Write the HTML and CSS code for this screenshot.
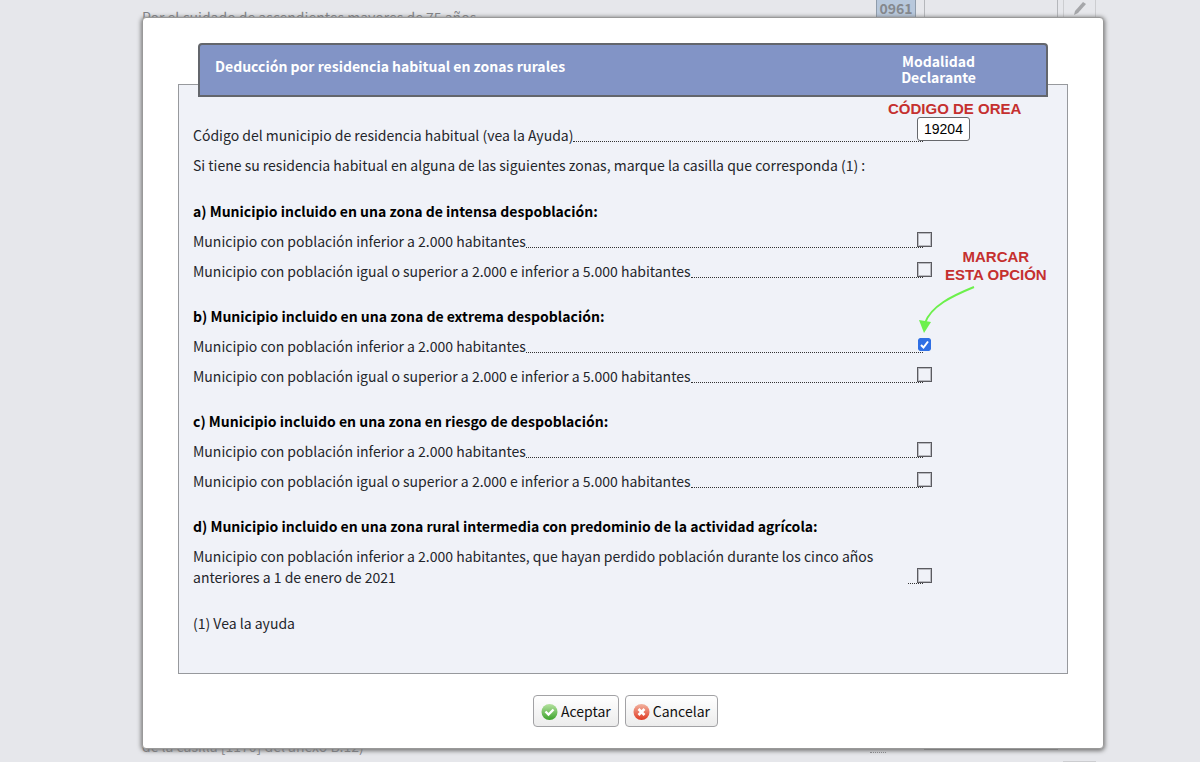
FILE: index.html
```html
<!DOCTYPE html>
<html lang="es">
<head>
<meta charset="utf-8">
<title>Deducción por residencia habitual en zonas rurales</title>
<link rel="stylesheet" href="styles.css">
</head>
<body>
<div class="page" inert>
  <div class="page-row">
    <span class="page-text">Por el cuidado de ascendientes mayores de 75 años</span>
    <span class="page-code">0961</span>
    <span class="page-field"></span>
    <span class="page-edit">
      <svg width="16" height="16" viewBox="0 0 16 16"><path d="M2 15l1-4 8-9 3 2-8 9z" fill="#a5a6a9"/></svg>
    </span>
  </div>
  <div class="page-row page-row-end">
    <span class="page-text">de la casilla [1170] del anexo B.12)</span>
    <span class="page-dots"></span>
    <span class="page-field page-field-end"></span>
    <span class="page-edit page-edit-end"></span>
  </div>
</div>

<div class="overlay">
  <form class="dialog" role="dialog" aria-labelledby="title">
    <section class="panel">
      <header class="panel-head">
        <h1 class="title" id="title">Deducción por residencia habitual en zonas rurales</h1>
        <div class="mode">Modalidad<br>Declarante</div>
      </header>

      <div class="group">
        <div class="row">
          <label class="label" for="code">Código del municipio de residencia habitual (vea la Ayuda)</label>
          <span class="leader"></span>
          <span class="control">
            <input class="code" id="code" type="text" value="19204">
            <span class="note note-code">CÓDIGO DE OREA</span>
          </span>
        </div>
        <p class="text">Si tiene su residencia habitual en alguna de las siguientes zonas, marque la casilla que corresponda (1) :</p>
      </div>

      <div class="group">
        <h2 class="subtitle">a) Municipio incluido en una zona de intensa despoblación:</h2>
        <div class="row">
          <label class="label" for="a1">Municipio con población inferior a 2.000 habitantes</label>
          <span class="leader"></span>
          <span class="control"><input class="check" id="a1" type="checkbox"></span>
        </div>
        <div class="row">
          <label class="label" for="a2">Municipio con población igual o superior a 2.000 e inferior a 5.000 habitantes</label>
          <span class="leader"></span>
          <span class="control"><input class="check" id="a2" type="checkbox"></span>
        </div>
      </div>

      <div class="group">
        <h2 class="subtitle">b) Municipio incluido en una zona de extrema despoblación:</h2>
        <div class="row">
          <label class="label" for="b1">Municipio con población inferior a 2.000 habitantes</label>
          <span class="leader"></span>
          <span class="control">
            <input class="check" id="b1" type="checkbox" checked>
            <span class="note note-option">MARCAR<br>ESTA OPCIÓN</span>
            <svg class="arrow" width="60" height="50" viewBox="0 0 60 50"><path d="M56 3C34 12 13 22 7 39" fill="none" stroke="#6cf04c" stroke-width="2"/><path d="M1 36l12 2-7 11z" fill="#6cf04c"/></svg>
          </span>
        </div>
        <div class="row">
          <label class="label" for="b2">Municipio con población igual o superior a 2.000 e inferior a 5.000 habitantes</label>
          <span class="leader"></span>
          <span class="control"><input class="check" id="b2" type="checkbox"></span>
        </div>
      </div>

      <div class="group">
        <h2 class="subtitle">c) Municipio incluido en una zona en riesgo de despoblación:</h2>
        <div class="row">
          <label class="label" for="c1">Municipio con población inferior a 2.000 habitantes</label>
          <span class="leader"></span>
          <span class="control"><input class="check" id="c1" type="checkbox"></span>
        </div>
        <div class="row">
          <label class="label" for="c2">Municipio con población igual o superior a 2.000 e inferior a 5.000 habitantes</label>
          <span class="leader"></span>
          <span class="control"><input class="check" id="c2" type="checkbox"></span>
        </div>
      </div>

      <div class="group">
        <h2 class="subtitle">d) Municipio incluido en una zona rural intermedia con predominio de la actividad agrícola:</h2>
        <div class="row">
          <label class="label" for="d1">Municipio con población inferior a 2.000 habitantes, que hayan perdido población durante los cinco años anteriores a 1 de enero de 2021</label>
          <span class="leader"></span>
          <span class="control"><input class="check" id="d1" type="checkbox"></span>
        </div>
      </div>

      <p class="text">(1) Vea la ayuda</p>
    </section>

    <div class="actions">
      <button class="button" type="submit">
        <svg width="18" height="18" viewBox="0 0 18 18">
          <defs><linearGradient id="green" x1="0" y1="0" x2="0" y2="1"><stop offset="0" stop-color="#b5e2a0"/><stop offset="1" stop-color="#3da32c"/></linearGradient></defs>
          <circle cx="8.500" cy="10" r="8" fill="url(#green)"/>
          <path d="M4.500 9.500l3 3 5-5" fill="none" stroke="#fff" stroke-width="2.400"/>
        </svg>
        Aceptar
      </button>
      <button class="button" type="button">
        <svg width="18" height="18" viewBox="0 0 18 18">
          <defs><linearGradient id="red" x1="0" y1="0" x2="0" y2="1"><stop offset="0" stop-color="#f2b3a0"/><stop offset="1" stop-color="#e03a22"/></linearGradient></defs>
          <circle cx="8.500" cy="10" r="8" fill="url(#red)"/>
          <path d="M5.500 7l6 6M11.500 7l-6 6" fill="none" stroke="#fff" stroke-width="2.600"/>
        </svg>
        Cancelar
      </button>
    </div>
  </form>
</div>
</body>
</html>
```
FILE: styles.css
```css
* {
  box-sizing: border-box;
}

body {
  margin: 0;
  background: #e6e7eb;
  color: #24262b;
  font: 14px/21px "Noto Sans CJK SC", "Open Sans", sans-serif;
}

h1, h2, p {
  margin: 0;
}

/* Form behind the dialog */
.page {
  display: flex;
  flex-direction: column;
  justify-content: space-between;
  height: 100vh;
  padding: 0 104px 0 142px;
  overflow: hidden;
  color: #808286;
}

.page-row {
  display: flex;
  align-items: flex-start;
}

.page-text {
  flex: 1;
  padding-top: 7px;
}

.page-code {
  width: 40px;
  height: 21px;
  margin-right: 8px;
  border: 1px solid #8f9cab;
  border-top: 0;
  background: #b8c8dc;
  color: #85888e;
  font-weight: 700;
  line-height: 17px;
  text-align: center;
}

.page-field {
  width: 134px;
  height: 21px;
  margin-right: 5px;
  border: 1px solid #b5b7bb;
  border-top: 0;
}

.page-edit {
  display: flex;
  justify-content: center;
  width: 33px;
  height: 21px;
  border: 1px solid #cccdd0;
  border-top: 0;
}

.page-row-end {
  height: 30px;
}

.page-row-end .page-text {
  padding-top: 4px;
}

.page-dots {
  width: 16px;
  height: 21px;
  margin-right: 38px;
  border-bottom: 1px dotted #8b8d91;
}

.page-field-end {
  height: 18px;
  border: 0;
  border-bottom: 1px solid #8f8f91;
}

.page-edit-end {
  height: 30px;
  border: 0;
  border-bottom: 1px solid #cccdd0;
}

/* Dialog */
.overlay {
  position: absolute;
  inset: 0;
  padding: 17px 96px 0 142px;
}

.dialog {
  padding: 66px 35px 21px;
  border: 1px solid #999;
  border-radius: 4px;
  background: #fff;
  box-shadow: 0 1px 4px 1px #777;
}

.panel {
  padding: 0 14px 39px;
  border: 1px solid #97999d;
  background: #f0f2f8;
}

.panel-head {
  display: flex;
  justify-content: space-between;
  align-items: flex-start;
  margin: -42px 5px 28px;
  padding: 8px 70px 10px 15px;
  border: 2px solid #63666c;
  border-radius: 4px 4px 0 0;
  background: #8294c6;
  color: #fff;
  font-weight: 700;
}

.title {
  padding-top: 3px;
  font-size: 14px;
  line-height: 21px;
}

.mode {
  line-height: 16px;
  text-align: center;
}

.group {
  display: flex;
  flex-direction: column;
  gap: 9px;
  margin-bottom: 24px;
}

.group:first-of-type,
.group:last-of-type {
  margin-bottom: 25px;
}

.subtitle {
  color: #000;
  font-size: 14px;
  line-height: 21px;
}

.row {
  display: flex;
  align-items: flex-end;
}

.label {
  max-width: 715px;
}

.leader {
  flex: 1;
  margin: 0 -6px 4px 0;
  border-bottom: 1px dotted #333;
}

.control {
  display: flex;
  position: relative;
  width: 136px;
}

.check {
  appearance: none;
  width: 15px;
  height: 15px;
  margin: 0 0 5px;
  border: 1px solid #5b5b60;
  outline: 1px solid #b9bac0;
  outline-offset: -2px;
}

.check:checked {
  border: 1px solid #f0f2f8;
  border-radius: 3px;
  outline: 0;
  background: #2f6fe4 url("data:image/svg+xml,%3Csvg xmlns='http://www.w3.org/2000/svg' viewBox='0 0 13 13'%3E%3Cpath d='M3 7l2.500 2.500L10 3.500' fill='none' stroke='white' stroke-width='2'/%3E%3C/svg%3E") padding-box;
  background-clip: padding-box;
}

.code {
  width: 53px;
  height: 24px;
  margin: -8px 0 5px;
  padding: 0 6px;
  border: 1px solid #66686c;
  border-radius: 3px;
  background: #fff;
  color: #000;
  font: 14px "Liberation Sans", Arial, sans-serif;
}

.note {
  position: absolute;
  color: #c5302f;
  font: 700 15px/18px "Liberation Sans", Arial, sans-serif;
  text-align: center;
  white-space: nowrap;
}

.note-code {
  bottom: 28px;
  left: -29px;
}

.note-option {
  bottom: 73px;
  left: 28px;
}

.arrow {
  position: absolute;
  bottom: 23px;
  left: 1px;
}

.actions {
  display: flex;
  justify-content: center;
  gap: 6px;
  margin-top: 21px;
  padding-left: 5px;
}

.button {
  display: flex;
  align-items: center;
  gap: 2px;
  height: 32px;
  padding: 0 7px;
  border: 1px solid #a2a2a5;
  border-radius: 4px;
  background: linear-gradient(#fff, #ececec);
  color: #111;
  font: 14px/21px "Noto Sans CJK SC", "Open Sans", sans-serif;
}
```
